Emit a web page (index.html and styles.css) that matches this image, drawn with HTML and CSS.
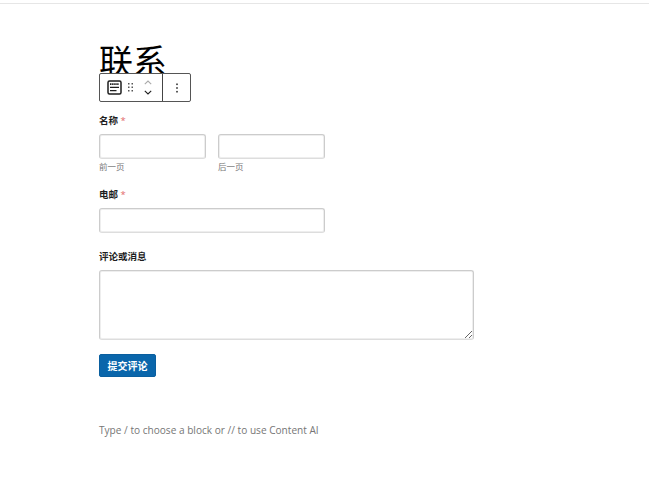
FILE: index.html
```html
<!DOCTYPE html>
<html lang="zh">
<head>
  <meta charset="UTF-8">
  <title>联系</title>
  <link rel="stylesheet" href="styles.css">
</head>
<body>
  <div class="top-bar"></div>
  <main class="editor">
    <h1 class="page-title">联系</h1>
    <div class="block-toolbar">
      <div class="toolbar-group">
        <svg class="form-icon" width="15" height="15" viewBox="0 0 15 15" fill="none" stroke="#1e1e1e">
          <rect x="1" y="1" width="13" height="13" rx="1.5" stroke-width="1.5"/>
          <path d="M3 4.2h9" stroke-width="1.8" stroke-dasharray="1.5 .6"/>
          <path d="M3 7.4h9M3 10.6h6.5" stroke-width="1.2"/>
        </svg>
        <svg class="drag-icon" width="7" height="9" viewBox="0 0 7 9" fill="#555">
          <rect x="1" y="0" width="1.5" height="1.5"/><rect x="4.5" y="0" width="1.5" height="1.5"/>
          <rect x="1" y="3.5" width="1.5" height="1.5"/><rect x="4.5" y="3.5" width="1.5" height="1.5"/>
          <rect x="1" y="7" width="1.5" height="1.5"/><rect x="4.5" y="7" width="1.5" height="1.5"/>
        </svg>
        <div class="mover">
          <svg width="8" height="5" viewBox="0 0 8 5" fill="none" stroke="#aaa" stroke-width="1.1"><path d="M.8 4.2L4 1l3.2 3.2"/></svg>
          <svg width="8" height="5" viewBox="0 0 8 5" fill="none" stroke="#1e1e1e" stroke-width="1.1"><path d="M.8.8L4 4l3.2-3.2"/></svg>
        </div>
      </div>
      <div class="toolbar-more">
        <svg width="4" height="10" viewBox="0 0 4 10" fill="#333">
          <rect x="1.2" y="0.5" width="1.6" height="1.6"/><rect x="1.2" y="4.2" width="1.6" height="1.6"/><rect x="1.2" y="7.9" width="1.6" height="1.6"/>
        </svg>
      </div>
    </div>

    <form class="contact-form">
      <div class="field field-name">
        <label class="field-label">名称 <span class="required">*</span></label>
        <div class="name-row">
          <div class="name-part">
            <input type="text" class="text-input">
            <span class="hint">前一页</span>
          </div>
          <div class="name-part">
            <input type="text" class="text-input">
            <span class="hint">后一页</span>
          </div>
        </div>
      </div>
      <div class="field field-email">
        <label class="field-label">电邮 <span class="required">*</span></label>
        <input type="text" class="text-input email-input">
      </div>
      <div class="field field-message">
        <label class="field-label">评论或消息</label>
        <textarea class="message-input"></textarea>
      </div>
      <button type="button" class="submit-btn">提交评论</button>
    </form>

    <p class="block-prompt">Type / to choose a block or // to use Content AI</p>
  </main>
</body>
</html>
```

FILE: styles.css
```css
html, body {
  height: 100%;
}
body {
  margin: 0;
  background: #fff;
  color: #1e1e1e;
  font-family: "Open Sans", "Noto Sans CJK SC", sans-serif;
  overflow: hidden;
}
.top-bar {
  height: 3px;
  border-bottom: 1px solid #e6e6e6;
}
.editor {
  width: 375px;
  margin-left: 99px;
}
.page-title {
  margin: 0;
  padding-top: 35px;
  height: 34px;
  font-family: "Noto Sans CJK SC", sans-serif;
  font-size: 34px;
  font-weight: 400;
  line-height: 42px;
  color: #000;
}
.block-toolbar {
  position: relative;
  display: flex;
  box-sizing: border-box;
  width: 92px;
  height: 29px;
  border: 1px solid #555;
  border-radius: 2px;
  background: #fff;
}
.toolbar-group {
  display: flex;
  align-items: center;
  width: 62px;
  border-right: 1px solid #444;
}
.form-icon {
  margin-left: 7px;
}
.drag-icon {
  margin-left: 5px;
}
.mover {
  display: flex;
  flex-direction: column;
  gap: 5px;
  margin-left: 10px;
}
.toolbar-more {
  flex: 1;
  display: flex;
  align-items: center;
  justify-content: center;
}
.contact-form {
  padding-top: 12px;
}
.field-label {
  display: block;
  font-size: 9.5px;
  font-weight: 700;
  line-height: 14px;
  color: #1e1e1e;
}
.required {
  color: #e2686a;
  font-weight: 400;
}
.name-row {
  display: flex;
  gap: 12px;
  margin-top: 6px;
}
.name-part {
  display: flex;
  flex-direction: column;
}
.text-input {
  box-sizing: border-box;
  display: block;
  width: 107px;
  height: 25px;
  margin: 0;
  padding: 0 6px;
  background: #fff;
  border: 1px solid #ccc;
  border-bottom-color: #ddd;
  border-radius: 3px;
  box-shadow: inset 0 0 0 1px #eee;
}
.hint {
  margin-top: 1px;
  font-size: 8.5px;
  line-height: 13px;
  color: #777;
}
.field-email {
  margin-top: 15px;
}
.email-input {
  width: 226px;
  margin-top: 6px;
}
.field-message {
  margin-top: 17px;
}
.message-input {
  box-sizing: border-box;
  display: block;
  width: 375px;
  height: 70px;
  margin-top: 6px;
  padding: 6px;
  background: #fff;
  border: 1px solid #ccc;
  border-bottom-color: #ddd;
  border-radius: 3px;
  box-shadow: inset 0 0 0 1px #eee;
}
.submit-btn {
  display: block;
  width: 57px;
  height: 23px;
  margin-top: 14px;
  padding: 0;
  background: #0a66ab;
  border: 1px solid #0a5f9f;
  border-radius: 2px;
  color: #fff;
  font-family: inherit;
  font-size: 10px;
  font-weight: 700;
}
.block-prompt {
  margin: 45px 0 0;
  font-family: "Open Sans", sans-serif;
  font-size: 10.1px;
  line-height: 16px;
  color: #767676;
}
```
